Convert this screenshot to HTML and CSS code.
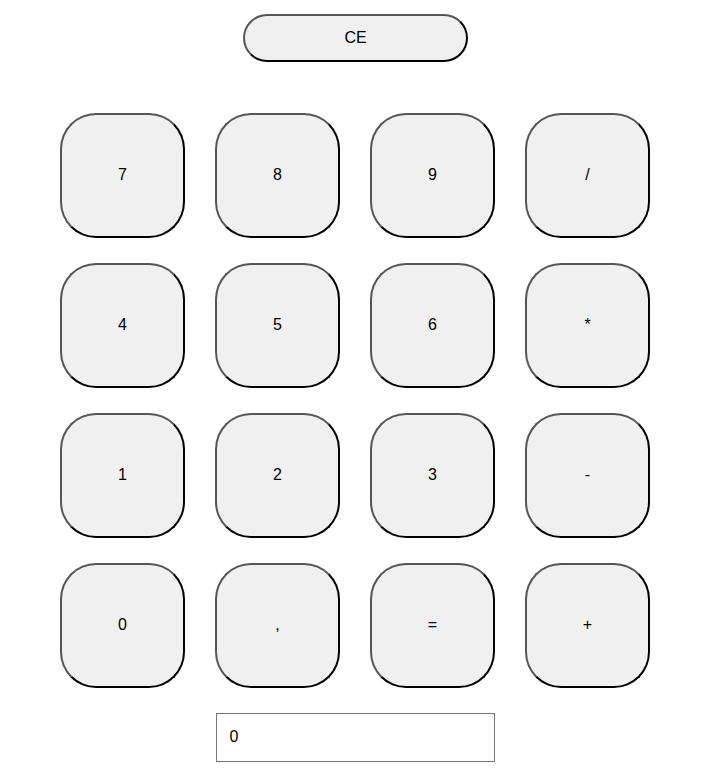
FILE: index.html
```html
<!DOCTYPE html>
<html>
<head>
<meta charset="utf-8">
<link rel="stylesheet" href="styles.css">
</head>
<body>
<div class="calc">
  <button class="ce">CE</button>
  <div class="keys">
    <button class="key">7</button>
    <button class="key">8</button>
    <button class="key">9</button>
    <button class="key">/</button>
    <button class="key">4</button>
    <button class="key">5</button>
    <button class="key">6</button>
    <button class="key">*</button>
    <button class="key">1</button>
    <button class="key">2</button>
    <button class="key">3</button>
    <button class="key">-</button>
    <button class="key">0</button>
    <button class="key">,</button>
    <button class="key">=</button>
    <button class="key">+</button>
  </div>
  <input class="display" type="text" value="0">
</div>
</body>
</html>
```
FILE: styles.css
```css
html, body {
  margin: 0;
  padding: 0;
  background: #ffffff;
}
.calc {
  width: 710px;
  display: flex;
  flex-direction: column;
  align-items: center;
  padding-top: 14px;
  font-family: "Liberation Sans", Arial, sans-serif;
}
button {
  font-family: "Liberation Sans", Arial, sans-serif;
  font-size: 16px;
  color: #000;
  background: #f0f0f0;
  border-width: 2px;
  border-style: solid;
  border-color: #555 #000 #000 #555;
  padding: 0;
  box-sizing: border-box;
}
.ce {
  width: 225px;
  height: 48px;
  margin-left: 1px;
  border-radius: 24px;
}
.keys {
  margin-top: 51px;
  display: grid;
  grid-template-columns: repeat(4, 125px);
  grid-auto-rows: 125px;
  column-gap: 30px;
  row-gap: 25px;
}
.key {
  width: 125px;
  height: 125px;
  padding-bottom: 2px;
  border-radius: 36px;
}
.display {
  margin-top: 25px;
  width: 279px;
  height: 49px;
  box-sizing: border-box;
  border: 1px solid #767676;
  padding: 0 13px 2px;
  font-family: "Liberation Sans", Arial, sans-serif;
  font-size: 16px;
  color: #000;
  outline: none;
}
```
